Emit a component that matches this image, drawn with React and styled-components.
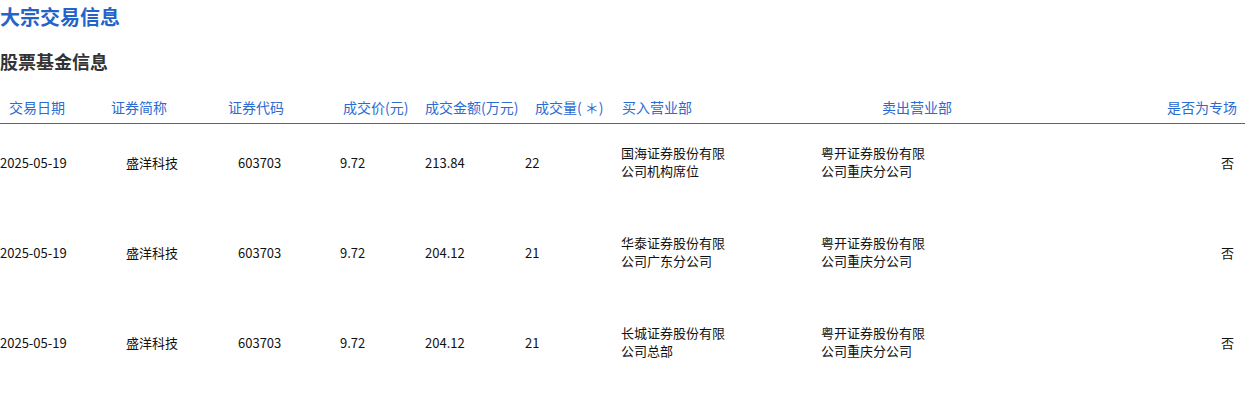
import React from 'react'
import styled, { createGlobalStyle } from 'styled-components'

const GlobalStyle = createGlobalStyle`
  body {
    margin: 0;
    background: #fff;
    font-family: "Noto Sans CJK SC", "Noto Sans", sans-serif;
  }
`

// start: column left edge, hx / dx: header and data text left edge
const columns = [
  { key: 'date', title: '交易日期', start: 0, hx: 9, dx: 0 },
  { key: 'name', title: '证券简称', start: 100, hx: 111, dx: 126 },
  { key: 'code', title: '证券代码', start: 215, hx: 228, dx: 238 },
  { key: 'price', title: '成交价(元)', start: 330, hx: 343, dx: 340 },
  { key: 'amount', title: '成交金额(万元)', start: 418, hx: 425, dx: 425 },
  { key: 'volume', title: '成交量( ＊)', start: 522, hx: 535, dx: 525 },
  { key: 'buyer', title: '买入营业部', start: 612, hx: 622, dx: 621 },
  { key: 'seller', title: '卖出营业部', start: 760, hx: 882, dx: 821 },
  { key: 'special', title: '是否为专场', start: 1000, right: true, hr: 8, dr: 11 },
]

const widths = columns.map((c, i) => (i < columns.length - 1 ? `${columns[i + 1].start - c.start}px` : '1fr')).join(' ')

const rows = [
  { date: '2025-05-19', name: '盛洋科技', code: '603703', price: '9.72', amount: '213.84', volume: '22', buyer: '国海证券股份有限公司机构席位', seller: '粤开证券股份有限公司重庆分公司', special: '否' },
  { date: '2025-05-19', name: '盛洋科技', code: '603703', price: '9.72', amount: '204.12', volume: '21', buyer: '华泰证券股份有限公司广东分公司', seller: '粤开证券股份有限公司重庆分公司', special: '否' },
  { date: '2025-05-19', name: '盛洋科技', code: '603703', price: '9.72', amount: '204.12', volume: '21', buyer: '长城证券股份有限公司总部', seller: '粤开证券股份有限公司重庆分公司', special: '否' },
]

const Page = styled.div`
  width: 1245px;
`

const Title = styled.h1`
  margin: 0;
  font-size: 20px;
  line-height: 34px;
  font-weight: 700;
  color: #2463c9;
`

const SubTitle = styled.h2`
  margin: 14px 0 16px;
  font-size: 18px;
  line-height: 26px;
  font-weight: 700;
  color: #333;
`

const Row = styled.div`
  display: grid;
  grid-template-columns: ${widths};
  align-items: center;
`

const HeadRow = styled(Row)`
  height: 33px;
  border-bottom: 1px solid #2f6ac6;
`

const BodyRow = styled(Row)`
  height: 78px;
  margin-bottom: 12px;
`

const HeadCell = styled.div`
  font-size: 14px;
  color: #2c6bd2;
  white-space: nowrap;
  padding-left: ${p => p.$left || 0}px;
  padding-right: ${p => p.$rightPad || 0}px;
  text-align: ${p => (p.$right ? 'right' : 'left')};
`

const Cell = styled.div`
  font-size: 13px;
  line-height: 18px;
  color: #111;
  padding-left: ${p => p.$left || 0}px;
  padding-right: ${p => p.$rightPad || 0}px;
  text-align: ${p => (p.$right ? 'right' : 'left')};
`

const Wrap = styled.span`
  display: block;
  width: 105px;
  margin-top: -2px;
`

const App = () => (
  <Page>
    <GlobalStyle />
    <Title>大宗交易信息</Title>
    <SubTitle>股票基金信息</SubTitle>
    <HeadRow>
      {columns.map(c => (
        <HeadCell key={c.key} $left={c.right ? 0 : c.hx - c.start} $rightPad={c.hr} $right={c.right}>
          {c.title}
        </HeadCell>
      ))}
    </HeadRow>
    {rows.map((r, i) => (
      <BodyRow key={i}>
        {columns.map(c => (
          <Cell key={c.key} $left={c.right ? 0 : c.dx - c.start} $rightPad={c.dr} $right={c.right}>
            {c.key === 'buyer' || c.key === 'seller' ? <Wrap>{r[c.key]}</Wrap> : r[c.key]}
          </Cell>
        ))}
      </BodyRow>
    ))}
  </Page>
)

export default App
